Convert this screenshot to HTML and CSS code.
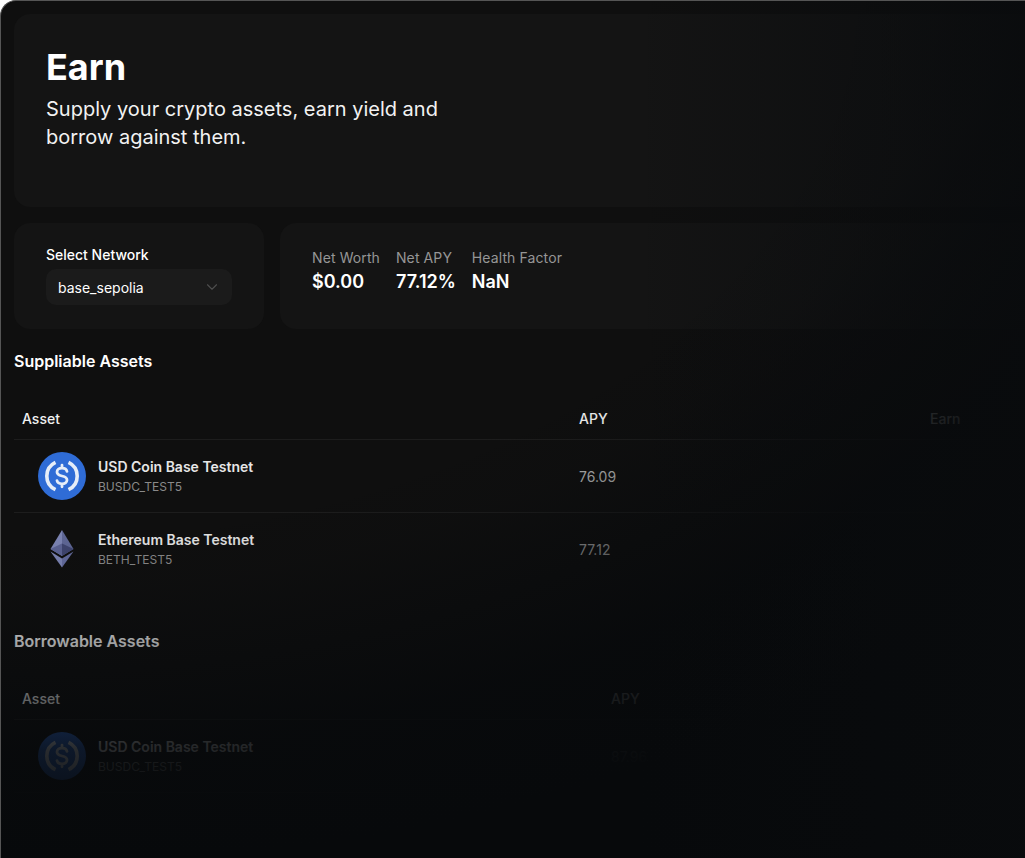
FILE: index.html
```html
<!DOCTYPE html>
<html lang="en">
<head>
<meta charset="utf-8">
<title>Earn</title>
<link rel="stylesheet" href="styles.css">
</head>
<body>
<div class="frame">
  <main class="page">
    <section class="hero">
      <h1 class="hero-title">Earn</h1>
      <p class="hero-text">Supply your crypto assets, earn yield and<br>borrow against them.</p>
    </section>
    <section class="summary">
      <div class="card network">
        <div class="network-label">Select Network</div>
        <div class="select">
          <span>base_sepolia</span>
          <svg class="chevron" viewBox="0 0 24 24" width="18" height="18" fill="none" stroke="currentColor" stroke-width="1.5" stroke-linecap="round" stroke-linejoin="round"><path d="m6 9 6 6 6-6"/></svg>
        </div>
      </div>
      <div class="card stats">
        <div class="stat"><div class="stat-label">Net Worth</div><div class="stat-value">$0.00</div></div>
        <div class="stat"><div class="stat-label">Net APY</div><div class="stat-value">77.12%</div></div>
        <div class="stat"><div class="stat-label">Health Factor</div><div class="stat-value">NaN</div></div>
      </div>
    </section>

    <h2 class="section-title">Suppliable Assets</h2>
    <div class="table supply">
      <div class="row head"><span>Asset</span><span>APY</span><span>Earn</span></div>
      <div class="row item">
        <div class="asset">
          <svg class="coin" viewBox="0 0 48 48"><circle cx="24" cy="24" r="24" fill="#2f6cd6"/><path d="M17.5 10.260a15.200 15.200 0 0 0 0 27.480M30.500 10.260a15.200 15.200 0 0 1 0 27.480" fill="none" stroke="#e6edf8" stroke-width="3.600"/><path d="M29 19.400c-.4-2-2.400-3.200-5-3.200-2.900 0-5 1.500-5 3.800 0 2.400 2 3.300 5 4 3 .7 5 1.600 5 4 0 2.300-2.100 3.800-5 3.800-2.600 0-4.600-1.200-5-3.200M24 13.200v3M24 31.800v3" fill="none" stroke="#e6edf8" stroke-width="2.800" stroke-linecap="round"/></svg>
          <div><div class="asset-name">USD Coin Base Testnet</div><div class="asset-code">BUSDC_TEST5</div></div>
        </div>
        <span class="apy">76.09</span><span></span>
      </div>
      <div class="row item last">
        <div class="asset">
          <svg class="coin" viewBox="0 0 48 48"><path d="M24 5 12.500 24 24 31z" fill="#7c84b4"/><path d="M24 5 35.500 24 24 31z" fill="#5f6796"/><path d="M12.500 24 24 18.500 24 31z" fill="#5c6394"/><path d="M35.500 24 24 18.500 24 31z" fill="#3f4570"/><path d="M12.500 26.500 24 33.500V42.500z" fill="#7c84b4"/><path d="M35.500 26.500 24 33.500V42.500z" fill="#646c9e"/></svg>
          <div><div class="asset-name">Ethereum Base Testnet</div><div class="asset-code">BETH_TEST5</div></div>
        </div>
        <span class="apy">77.12</span><span></span>
      </div>
    </div>

    <h2 class="section-title borrow-title">Borrowable Assets</h2>
    <div class="table borrow">
      <div class="row head"><span>Asset</span><span>APY</span></div>
      <div class="row item">
        <div class="asset">
          <svg class="coin" viewBox="0 0 48 48"><circle cx="24" cy="24" r="24" fill="#2f6cd6"/><path d="M17.5 10.260a15.200 15.200 0 0 0 0 27.480M30.500 10.260a15.200 15.200 0 0 1 0 27.480" fill="none" stroke="#e6edf8" stroke-width="3.600"/><path d="M29 19.400c-.4-2-2.400-3.200-5-3.200-2.900 0-5 1.500-5 3.800 0 2.400 2 3.300 5 4 3 .7 5 1.600 5 4 0 2.300-2.100 3.800-5 3.800-2.600 0-4.600-1.200-5-3.200M24 13.200v3M24 31.800v3" fill="none" stroke="#e6edf8" stroke-width="2.800" stroke-linecap="round"/></svg>
          <div><div class="asset-name">USD Coin Base Testnet</div><div class="asset-code">BUSDC_TEST5</div></div>
        </div>
        <span class="apy">87.96</span>
      </div>
    </div>
  </main>
  <div class="fade"></div>
</div>
</body>
</html>
```

FILE: styles.css
```css
* { box-sizing: border-box; }
html, body { margin: 0; height: 100%; background: #fff; overflow: hidden; }
body { font-family: Inter, "Liberation Sans", sans-serif; color: #fff; }

.frame {
  position: relative;
  width: 1025px;
  height: 858px;
  overflow: hidden;
  background: #0f0f0f;
  border: 1px solid #555;
  border-bottom: 0;
  border-right: 0;
  border-radius: 16px 0 0 0;
}
.page { width: 1300px; padding: 13px 0 0 13px; }

.fade {
  position: absolute;
  inset: -1px 0 0 -1px;
  pointer-events: none;
  background:
    linear-gradient(to right, rgba(9, 11, 13, 0) 62%, rgba(9, 11, 13, .8) 100%),
    radial-gradient(1300px 820px at 0 0,
      rgba(7, 9, 11, 0) 64%,
      rgba(7, 9, 11, .1) 72%,
      rgba(7, 9, 11, .35) 78%,
      rgba(7, 9, 11, .6) 85%,
      rgba(7, 9, 11, .85) 91.5%,
      rgba(7, 9, 11, .9) 95%,
      #07090b 106%);
}

.hero {
  height: 193px;
  padding: 33px 32px;
  background: #141414;
  border-radius: 16px;
}
.hero-title { margin: 0 0 8px; font-size: 36px; line-height: 40px; font-weight: 700; }
.hero-text { margin: 0; font-size: 20px; line-height: 28px; color: #f2f2f2; }

.summary { display: flex; gap: 16px; margin-top: 16px; }
.card { background: #141414; border-radius: 16px; height: 106px; }
.network { width: 250px; padding: 24px 32px; }
.network-label { font-size: 14px; line-height: 16px; font-weight: 500; margin-bottom: 6px; }
.select {
  display: flex;
  align-items: center;
  justify-content: space-between;
  height: 36px;
  padding: 0 11px 0 12px;
  background: #1b1b1b;
  border-radius: 10px;
  font-size: 14px;
}
.chevron { color: #4e4e4e; }

.stats { flex: 1; display: flex; gap: 16px; padding: 25px 32px; }
.stat-label { font-size: 14px; line-height: 20px; color: #969696; letter-spacing: .1px; }
.stat-value { font-size: 18px; line-height: 28px; font-weight: 600; }

.section-title { margin: 0; padding-top: 23px; font-size: 16px; line-height: 18px; font-weight: 600; }
.borrow-title { padding-top: 46px; }

.table { margin-top: 28px; }
.row { display: grid; align-items: center; padding-left: 8px; border-bottom: 1px solid #1d1d1d; }
.supply .row { grid-template-columns: 557px 351px 1fr; }
.borrow .row { grid-template-columns: 589px 1fr; }
.head { height: 42px; font-size: 14px; line-height: 20px; font-weight: 500; color: #f0f0f0; }
.item { height: 73px; }
.row.last { border-bottom-color: transparent; }
.asset { display: flex; align-items: center; gap: 12px; padding-left: 16px; }
.coin { width: 48px; height: 48px; display: block; }
.asset-name { font-size: 14px; line-height: 20px; font-weight: 600; color: #e6e6e6; }
.asset-code { font-size: 12px; line-height: 16px; margin-top: 2px; color: #8a8a8a; }
.apy { font-size: 14px; color: #b4b4b4; }
```
